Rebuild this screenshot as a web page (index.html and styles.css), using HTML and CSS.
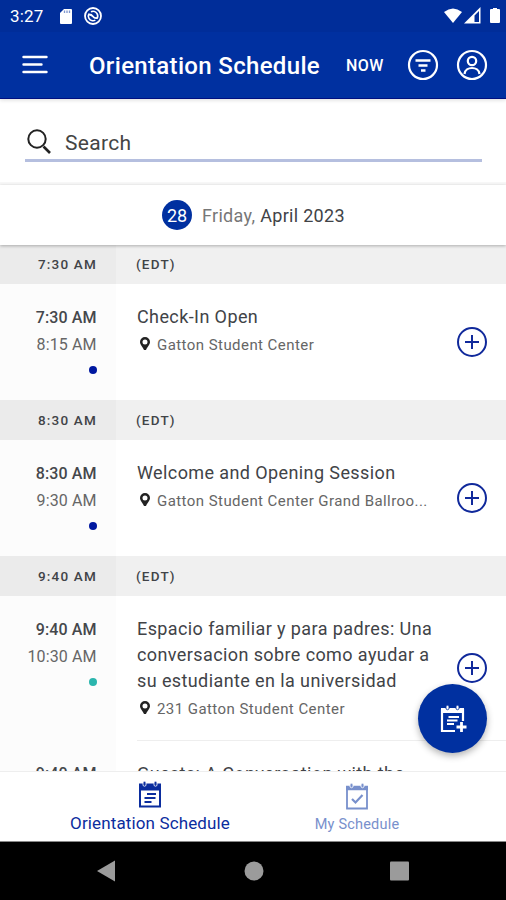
FILE: index.html
```html
<!DOCTYPE html>
<html lang="en">
<head>
<meta charset="utf-8">
<title>Orientation Schedule</title>
<link rel="stylesheet" href="styles.css">
</head>
<body>
<svg class="defs" aria-hidden="true">
  <symbol id="pin" viewBox="0 0 12 16"><path fill-rule="evenodd" d="M6 1a5 5 0 0 0-5 5c0 3 3 5 4 8h2c1-3 4-5 4-8a5 5 0 0 0-5-5zm0 2.400a2.500 2.500 0 1 1 0 5 2.500 2.500 0 0 1 0-5z"/></symbol>
  <symbol id="plus" viewBox="0 0 32 32"><circle cx="16" cy="16" r="14"/><path d="M9 16h14M16 9v14"/></symbol>
</svg>
<div class="screen">
  <header class="top">
    <div class="status">
      <span class="clock">3:27</span>
      <svg class="sd" viewBox="0 0 14 17"><path fill="#fff" d="M5 1h7q1 0 1 1v13q0 1-1 1H2q-1 0-1-1V5z"/><path stroke="#0030a0" stroke-width="1.3" d="M5.500 2.500v2.500M8 2.500v2.500M10.500 2.500v2.500" opacity=".5"/></svg>
      <svg class="sync" viewBox="0 0 20 20" fill="none" stroke="#fff"><circle cx="10" cy="10" r="8" stroke-width="1.8"/><circle cx="10" cy="10" r="4.700" stroke-width="1.600" stroke-dasharray="12 2.760" transform="rotate(60 10 10)"/><path stroke-width="1.800" d="M6 8.500q2.500 0 4 2t4 1.500"/></svg>
      <svg class="signals" viewBox="0 0 58 18" fill="#fff"><path d="M1 5q9-7 18 0l-9 11z"/><path fill-rule="evenodd" d="M21 16.500L37.500 0v16.500zm10.500-1.500H36V4l-4.500 4.500z"/></path><path d="M48 2h2V1h4v1h2q1 0 1 1v12q0 1-1 1h-8q-1 0-1-1V3q0-1 1-1z"/></svg>
    </div>
    <div class="appbar">
      <svg class="menu" viewBox="0 0 28 22" stroke="#fff" stroke-width="2.400" stroke-linecap="round"><path d="M2.500 3h23M2.500 10.500h18M2.500 18h23"/></svg>
      <h1>Orientation Schedule</h1>
      <span class="now">NOW</span>
      <svg class="round filter" viewBox="0 0 32 32" fill="none" stroke="#fff"><circle cx="16" cy="16" r="14" stroke-width="2.200"/><path stroke-width="2.600" d="M8.500 11.500h15M11.500 16.500h9M14 21.500h4.500"/></svg>
      <svg class="round" viewBox="0 0 32 32" fill="none" stroke="#fff" stroke-width="2.200"><circle cx="16" cy="16" r="14"/><circle cx="16" cy="12" r="4.200"/><path d="M8.500 25c1-8 14-8 15 0"/></svg>
    </div>
  </header>
  <div class="search">
    <div class="field">
      <svg viewBox="0 0 28 28" fill="none" stroke="#222"><circle cx="12" cy="11" r="8.700" stroke-width="2"/><path stroke-width="2.600" d="M18.500 18.500l6.500 6.500"/></svg>
      <span>Search</span>
    </div>
  </div>
  <div class="date"><b>28</b><span class="day">Friday,</span><span class="month">April 2023</span></div>
  <main class="list">
    <div class="group"><span class="slot">7:30 AM</span><span class="zone">(EDT)</span></div>
    <article>
      <div class="times"><b>7:30 AM</b><span>8:15 AM</span><i class="dot"></i></div>
      <div class="info"><h2>Check-In Open</h2><p><svg><use href="#pin"/></svg><span>Gatton Student Center</span></p></div>
      <svg class="add"><use href="#plus"/></svg>
    </article>
    <div class="group"><span class="slot">8:30 AM</span><span class="zone">(EDT)</span></div>
    <article>
      <div class="times"><b>8:30 AM</b><span>9:30 AM</span><i class="dot"></i></div>
      <div class="info"><h2>Welcome and Opening Session</h2><p><svg><use href="#pin"/></svg><span>Gatton Student Center Grand Ballroo...</span></p></div>
      <svg class="add"><use href="#plus"/></svg>
    </article>
    <div class="group"><span class="slot">9:40 AM</span><span class="zone">(EDT)</span></div>
    <article class="tall">
      <div class="times"><b>9:40 AM</b><span>10:30 AM</span><i class="dot teal"></i></div>
      <div class="info"><h2>Espacio familiar y para padres: Una<br>conversacion sobre como ayudar a<br>su estudiante en la universidad</h2><p><svg><use href="#pin"/></svg><span>231 Gatton Student Center</span></p></div>
      <svg class="add"><use href="#plus"/></svg>
    </article>
    <article class="next">
      <div class="times"><b>9:40 AM</b></div>
      <div class="info"><h2>Guests: A Conversation with the</h2></div>
    </article>
  </main>
  <button class="fab" aria-label="Add to schedule"><svg viewBox="0 0 28 28" fill="none" stroke="#fff"><path stroke-width="2.200" d="M24 16V5H3v21h13"/><path stroke-width="5" d="M2 5.500h23"/><path stroke-width="2.200" d="M9.500 12h10.500M8 15.500h10.500M8 19h7"/><path stroke-width="2.800" d="M22.500 17v10M17.500 22h10"/><path stroke="#0030a0" stroke-width=".8" fill="#fff" d="M7 1q1.500-1.500 3 0v3q-1.500 1.500-3 0zM17 1q1.500-1.500 3 0v3q-1.500 1.500-3 0z"/></svg></button>
  <nav class="tabs">
    <div class="tab current"><svg viewBox="0 0 24 28" fill="none" stroke="currentColor"><path stroke-width="2" d="M2 5h20v20.500H2z"/><path stroke-width="7" d="M1 6h22"/><path stroke-width="2.200" d="M9 13h9M6.500 17h11M6.500 21h7"/><path stroke="#fff" stroke-width=".8" fill="currentColor" d="M5 1q1.500-1.500 3 0v3.500q-1.500 1.500-3 0zM16 1q1.500-1.500 3 0v3.500q-1.500 1.500-3 0z"/></svg><span>Orientation Schedule</span></div>
    <div class="tab other"><svg viewBox="0 0 24 28" fill="none" stroke="currentColor"><path stroke-width="1.800" d="M2 5h20v20.500H2z"/><path stroke-width="4.500" d="M1 5h22"/><path stroke-width="2.200" d="M7 16l3.500 3.500 7-7.500"/><path stroke="#fff" stroke-width=".8" fill="currentColor" d="M5 1q1.500-1.500 3 0v3q-1.500 1.500-3 0zM16 1q1.500-1.500 3 0v3q-1.500 1.500-3 0z"/></svg><span>My Schedule</span></div>
  </nav>
  <footer class="system"><svg viewBox="0 0 506 58" fill="#9b9b9b"><path d="M97 29l18-10.500v21z"/><circle cx="254" cy="29" r="9.500"/><rect x="390" y="19.500" width="19" height="19" rx="1"/></svg></footer>
</div>
</body>
</html>
```

FILE: styles.css
```css
* { box-sizing: border-box; }
body { margin: 0; font-family: Roboto, sans-serif; color: #414347; }
h1, h2, p { margin: 0; font-weight: 400; }
svg { display: block; flex: none; }
.defs { position: absolute; width: 0; height: 0; }
.screen { position: relative; width: 506px; height: 900px; display: flex; flex-direction: column; background: #fff; overflow: hidden; }
.top { height: 99px; flex: none; background: #0030a0; border-bottom: 1px solid #000f80; color: #fff; box-shadow: 0 1px 4px rgba(0,0,0,.15); }
.status { height: 32px; display: flex; align-items: center; background: #002d99; padding-left: 10px; }
.clock { width: 49px; font-size: 17px; letter-spacing: .2px; }
.sd { width: 14px; height: 17px; }
.sync { width: 20px; height: 20px; margin-left: 10px; }
.signals { width: 58px; height: 18px; margin-left: auto; margin-right: 5px; }
.appbar { height: 66px; display: flex; align-items: center; padding-left: 21px; }
.menu { width: 28px; height: 22px; }
h1 { width: 297px; padding-left: 40px; padding-top: 2px; font-size: 24px; font-weight: 500; white-space: nowrap; letter-spacing: .33px; }
.now { width: 61px; font-size: 16px; font-weight: 500; letter-spacing: .4px; }
.round { width: 32px; height: 32px; }
.filter { margin-right: 17px; }
.search { height: 86px; flex: none; padding: 26px 24px 0 25px; border-bottom: 3px solid #f7f7f7; }
.field { height: 37px; display: flex; align-items: center; border-bottom: 3px solid #b5bfdf; }
.field svg { width: 28px; height: 28px; }
.field span { margin: 2px 0 0 12px; font-size: 21px; letter-spacing: .3px; color: #444; }
.date { height: 60px; flex: none; display: flex; align-items: center; padding-left: 162px; font-size: 18px; position: relative; box-shadow: 0 1px 3px rgba(0,0,0,.28); background: #fff; }
.date b { width: 30px; height: 30px; border-radius: 50%; background: #0030a0; color: #fff; text-align: center; line-height: 31px; font-weight: 400; }
.day { margin-left: 10px; color: #777; letter-spacing: .3px; }
.month { margin-left: 5px; letter-spacing: .3px; }
.list { height: 526px; flex: none; overflow: hidden; }
.group { height: 40px; display: flex; background: #f0f0f0; font-size: 13.5px; font-weight: 500; line-height: 40px; letter-spacing: 1.2px; }
.group:first-child { height: 39px; line-height: 38px; }
.slot { width: 116px; padding-right: 19px; text-align: right; background: #ebebeb; }
.zone { padding-left: 20px; }
article { height: 116px; display: flex; align-items: center; }
.times { width: 116px; align-self: stretch; display: flex; flex-direction: column; align-items: flex-end; padding: 20px 19.5px 0 0; background: #fcfcfc; font-size: 16px; letter-spacing: .1px; line-height: 27px; color: #666; }
.times b { font-weight: 500; color: #45474b; }
.dot { width: 8px; height: 8px; margin-top: 8px; border-radius: 50%; background: #0018a0; }
.teal { background: #2bb5ad; }
.info { width: 341px; align-self: stretch; padding: 20px 0 0 21px; }
h2 { font-size: 18px; line-height: 26px; letter-spacing: .4px; white-space: nowrap; }
p { display: flex; align-items: center; height: 29px; font-size: 15px; color: #666; letter-spacing: .44px; white-space: nowrap; }
p svg { width: 12px; height: 16px; margin: -1px 6px 0 2px; fill: #222; }
.add { width: 32px; height: 32px; margin-left: -1px; fill: none; stroke: #10299b; stroke-width: 2; }
.tall { height: 144px; }
.next { height: 100px; align-items: stretch; }
.next .info { width: 369px; margin-left: 21px; padding-left: 0; border-top: 1px solid #eee; }
.fab { position: absolute; left: 418px; top: 684px; width: 69px; height: 69px; display: flex; align-items: center; justify-content: center; border: 0; padding: 0; border-radius: 50%; background: #0030a0; box-shadow: 0 3px 7px rgba(0,0,0,.3); }
.fab svg { width: 28px; height: 28px; }
.tabs { height: 71px; flex: none; display: flex; border-top: 1px solid #eee; border-bottom: 1px solid #888; background: #fff; }
.tab { display: flex; flex-direction: column; align-items: center; white-space: nowrap; }
.tab svg { width: 24px; height: 28px; }
.current { width: 300px; padding-top: 9px; color: #0b2d9e; font-size: 17px; letter-spacing: .13px; }
.current span { margin-top: 3px; line-height: 22px; }
.other { width: 114px; padding-top: 11px; color: #7890cc; font-size: 14.5px; letter-spacing: .2px; }
.other span { margin-top: 4px; line-height: 20px; }
.system { height: 58px; flex: none; background: #000; }
.system svg { width: 506px; height: 58px; }
```
